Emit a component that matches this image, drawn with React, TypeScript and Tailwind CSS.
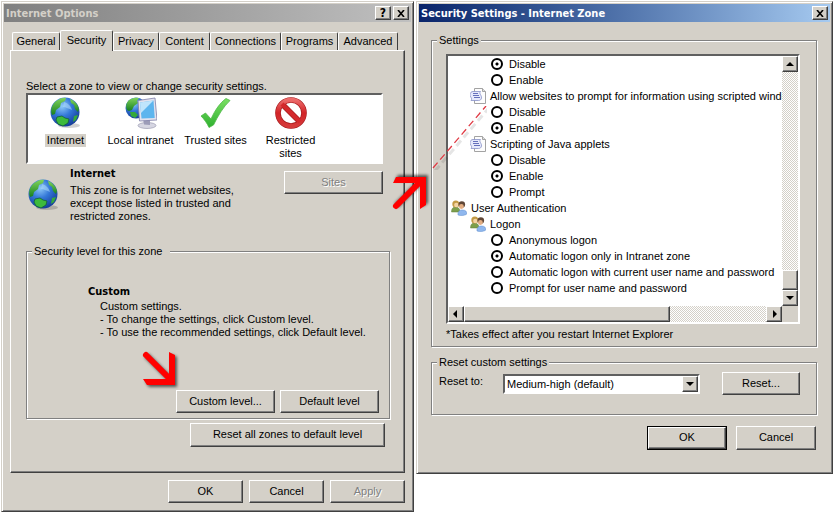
import { useState, type ReactNode } from 'react';

const TABS = [
  { label: 'General', width: 'w-[48px]' },
  { label: 'Security', width: 'w-[53px]' },
  { label: 'Privacy', width: 'w-[46px]' },
  { label: 'Content', width: 'w-[51px]' },
  { label: 'Connections', width: 'w-[71px]' },
  { label: 'Programs', width: 'w-[57px]' },
  { label: 'Advanced', width: 'w-[60px]' },
];

const OPTION_GROUPS = [
  { name: 'previous', icon: '', title: '', options: ['Disable', 'Enable'], initial: 'Disable' },
  {
    name: 'prompt',
    icon: 'script',
    title: 'Allow websites to prompt for information using scripted windo',
    options: ['Disable', 'Enable'],
    initial: 'Enable',
  },
  {
    name: 'java',
    icon: 'script',
    title: 'Scripting of Java applets',
    options: ['Disable', 'Enable', 'Prompt'],
    initial: 'Enable',
  },
  {
    name: 'logon',
    icon: 'users',
    title: 'Logon',
    options: [
      'Anonymous logon',
      'Automatic logon only in Intranet zone',
      'Automatic logon with current user name and password',
      'Prompt for user name and password',
    ],
    initial: 'Automatic logon only in Intranet zone',
  },
];

const RAISED =
  'border border-t-white border-l-white border-r-[#404040] border-b-[#404040] bg-[#d4d0c8] shadow-[inset_-1px_-1px_0_#808080]';
const SUNKEN =
  'border-2 border-t-[#606060] border-l-[#606060] border-r-white border-b-white bg-white';
const GROUP = 'border border-[#808080] shadow-[1px_1px_0_#fff,inset_1px_1px_0_#fff]';
const BOLD = "font-['DejaVu_Sans_Condensed','DejaVu_Sans',sans-serif] font-bold";

function GlobeIcon() {
  return (
    <svg viewBox="0 0 32 32" className="size-8 shrink-0" aria-hidden="true">
      <defs>
        <radialGradient id="globe-sea" cx="0.4" cy="0.3" r="0.75">
          <stop offset="0" stopColor="#8fcaf8" />
          <stop offset="0.45" stopColor="#3478d8" />
          <stop offset="1" stopColor="#123894" />
        </radialGradient>
        <linearGradient id="globe-land" x1="0" y1="0" x2="0" y2="1">
          <stop offset="0" stopColor="#7fd35c" />
          <stop offset="1" stopColor="#17801f" />
        </linearGradient>
      </defs>
      <ellipse cx="19" cy="28.5" rx="11" ry="2.5" fill="#000" opacity="0.18" />
      <circle cx="15" cy="15" r="14.5" fill="url(#globe-sea)" />
      <path d="M8 3c3-2 6-2.5 8-2l-1 3-4 2-1 4-4 3-1 4-3 1C-.5 12 3 5.500 8 3z" fill="url(#globe-land)" />
      <path d="M20 2c5 2 8 6 9 10l-1 3-3-3-1-4-3-2z" fill="url(#globe-land)" />
      <path d="M7 20l5-1 3 2 4 1-1 4-5 3-5-2-2-4z" fill="#3dba3c" stroke="#145f3a" strokeWidth="0.8" />
      <path d="M24 19l4-1-2 5-3 2z" fill="#35a93a" />
      <path d="M14 5c4 1 7 4 8 8-3-1-6-3-9-3z" fill="#b6e0fb" opacity="0.5" />
    </svg>
  );
}

function IntranetIcon() {
  return (
    <svg viewBox="0 0 32 32" className="size-8 shrink-0" aria-hidden="true">
      <circle cx="11" cy="11" r="10.5" fill="url(#globe-sea)" />
      <path d="M6 2c3-1.5 6-1.500 8-1l-2 3 1 2-4 3-2 4-3 1-2-1C0 8 2 4 6 2z" fill="url(#globe-land)" />
      <path d="M5 15l5 0 3 3-3 3-4-2z" fill="#35a93a" />
      <ellipse cx="22" cy="28.5" rx="9" ry="3" fill="#d6d6e2" stroke="#8b8ba5" strokeWidth="0.6" />
      <path d="M18 22l7 1v5l-6-.5z" fill="#9c9cb8" />
      <path d="M13 3.500L30 1l2 22-17.500 1z" fill="#e2e2ee" stroke="#8080a8" strokeWidth="0.8" />
      <path d="M15 5.500l13.500-2 1.200 17.500-13.200.5z" fill="#5db5ee" />
      <path d="M15 5.500l13.500-2L16 16z" fill="#bfe5fc" />
    </svg>
  );
}

function TrustedIcon() {
  return (
    <svg viewBox="0 0 32 32" className="size-8 shrink-0" aria-hidden="true">
      <defs>
        <linearGradient id="check" x1="0" y1="0" x2="0" y2="1">
          <stop offset="0" stopColor="#7be063" />
          <stop offset="1" stopColor="#2fb030" />
        </linearGradient>
      </defs>
      <path
        d="M1 19l4.500-3 5.500 6C15 13 20 6 26 1.500l4 2C23 10 18 19 13.500 28L9 30.500C7 26 4 22 1 19z"
        fill="url(#check)"
        stroke="#4db845"
        strokeWidth="0.8"
      />
    </svg>
  );
}

function RestrictedIcon() {
  return (
    <svg viewBox="0 0 32 32" className="size-8 shrink-0" aria-hidden="true">
      <defs>
        <linearGradient id="stop" x1="0" y1="0" x2="0" y2="1">
          <stop offset="0" stopColor="#ec6a6a" />
          <stop offset="0.5" stopColor="#d22427" />
          <stop offset="1" stopColor="#d63a3a" />
        </linearGradient>
      </defs>
      <g fill="none">
        <circle cx="16" cy="16" r="13" stroke="#a51a1c" strokeWidth="5.6" />
        <path d="M8 8l16 16" stroke="#a51a1c" strokeWidth="5.6" />
        <circle cx="16" cy="16" r="13" stroke="url(#stop)" strokeWidth="4.4" />
        <path d="M7 7l18 18" stroke="#d4292c" strokeWidth="4.2" />
      </g>
    </svg>
  );
}

function ScriptIcon() {
  return (
    <svg viewBox="0 0 16 16" className="size-4 shrink-0" aria-hidden="true">
      <path d="M4.500.5h8l3 3v12h-11z" fill="#fdfdfd" stroke="#a3a3a3" />
      <path d="M12.500.5v3h3" fill="#ddd" stroke="#a3a3a3" />
      <path
        d="M3 3.500h7.500c-2 2 1.500 4 1 6.500-.3 1.800-1.500 2.500-3 2.500H1c2-2-1.500-4-1-6 .3-1.800 1.300-3 3-3z"
        fill="#e6e9fc"
        stroke="#8890c8"
        strokeWidth="0.8"
      />
      <path d="M3 5.500h5M3 7.500h6M4 9.500h6" stroke="#6570bc" />
    </svg>
  );
}

function UsersIcon() {
  return (
    <svg viewBox="0 0 16 16" className="size-4 shrink-0" aria-hidden="true">
      <path d="M.5 12c0-3.500 1.500-5 4-5s4.500 1.500 4.500 5z" fill="#7d9f4c" stroke="#5d7c38" strokeWidth="0.5" />
      <circle cx="4.800" cy="4" r="3.500" fill="#c39a45" />
      <circle cx="5.300" cy="5" r="2.200" fill="#f3d3a4" />
      <path
        d="M7 15c-.5-3.500 1.500-5 4.500-5s4.500 1.500 4.300 4c-1.500 1.500-6 2-8.800 1z"
        fill="#8fb7ee"
        stroke="#5f8ccc"
        strokeWidth="0.5"
      />
      <circle cx="10.800" cy="4.500" r="3.300" fill="#5f4636" />
      <circle cx="10.400" cy="6.500" r="2.400" fill="#e3ae83" />
    </svg>
  );
}

function CloseIcon() {
  return (
    <svg viewBox="0 0 8 7" className="h-[7px] w-[8px]" aria-hidden="true">
      <path d="M1 0l6 7M7 0L1 7" stroke="#000" strokeWidth="1.6" />
    </svg>
  );
}

function Triangle({ points }: { points: string }) {
  return (
    <svg viewBox="0 0 8 8" className="size-2" aria-hidden="true">
      <polygon points={points} fill="#000" />
    </svg>
  );
}

const ZONES = [
  { label: 'Internet', icon: <GlobeIcon /> },
  { label: 'Local intranet', icon: <IntranetIcon /> },
  { label: 'Trusted sites', icon: <TrustedIcon /> },
  { label: 'Restricted sites', icon: <RestrictedIcon /> },
];

function WinButton({ className, disabled, children }: { className: string; disabled?: boolean; children: ReactNode }) {
  return (
    <button
      type="button"
      disabled={disabled}
      className={`${RAISED} ${className} shrink-0 whitespace-nowrap pb-px text-center disabled:text-[#808080] disabled:[text-shadow:1px_1px_0_#fff]`}
    >
      {children}
    </button>
  );
}

function CaptionButton({ label, children }: { label: string; children: ReactNode }) {
  return (
    <button
      type="button"
      aria-label={label}
      className={`${RAISED} ${BOLD} flex h-[14px] w-4 items-center justify-center text-[12px]`}
    >
      {children}
    </button>
  );
}

function ScrollButton({ label, points }: { label: string; points: string }) {
  return (
    <button type="button" aria-label={label} className={`${RAISED} flex size-4 shrink-0 items-center justify-center`}>
      <Triangle points={points} />
    </button>
  );
}

function Window({ children }: { children: ReactNode }) {
  return (
    <div className="border border-t-[#d4d0c8] border-l-[#d4d0c8] border-r-[#404040] border-b-[#404040] bg-[#d4d0c8] p-[2px] shadow-[inset_1px_1px_0_#fff,inset_-1px_-1px_0_#808080]">
      {children}
    </div>
  );
}

function InternetOptions() {
  const [zone, setZone] = useState('Internet');

  return (
    <Window>
      <header className="flex h-[18px] items-center justify-between bg-linear-to-r from-[#808080] to-[#c0c0c0] px-[2px]">
        <h1 className={`${BOLD} text-[#d4d0c8]`}>Internet Options</h1>
        <div className="flex gap-[2px]">
          <CaptionButton label="Help">?</CaptionButton>
          <CaptionButton label="Close">
            <CloseIcon />
          </CaptionButton>
        </div>
      </header>

      <div className="mx-[6px] mt-2">
        <div role="tablist" className="flex h-5 items-end pl-[2px]">
          {TABS.map((tab) => {
            const active = tab.label === 'Security';
            return (
              <button
                key={tab.label}
                type="button"
                role="tab"
                aria-selected={active}
                className={`${tab.width} rounded-t-[2px] border border-b-0 border-t-white border-l-white border-r-[#404040] bg-[#d4d0c8] text-center ${
                  active ? 'z-10 -mb-px h-[21px] pb-[2px]' : 'h-[18px]'
                }`}
              >
                {tab.label}
              </button>
            );
          })}
        </div>

        <div
          role="tabpanel"
          className="border border-t-white border-l-white border-r-[#404040] border-b-[#404040] pt-[29px] pr-[14px] pb-[25px] pl-[15px] shadow-[inset_-1px_-1px_0_#808080]"
        >
          <p>Select a zone to view or change security settings.</p>
          <div className={`${SUNKEN} mr-[7px] flex h-[71px] items-start pt-[2px]`}>
            {ZONES.map((z) => (
              <button
                key={z.label}
                type="button"
                onClick={() => setZone(z.label)}
                className="flex w-[75px] flex-col items-center gap-[5px]"
              >
                {z.icon}
                <span className={zone === z.label ? 'bg-[#d4d0c8] px-[2px]' : 'px-[2px]'}>{z.label}</span>
              </button>
            ))}
          </div>

          <div className="mt-[3px] mr-[7px] flex items-start">
            <div className="mt-3 ml-[2px]">
              <GlobeIcon />
            </div>
            <div className="ml-[10px] flex-1">
              <h2 className={BOLD}>Internet</h2>
              <p className="mt-1 max-w-[170px]">
                This zone is for Internet websites, except those listed in trusted and restricted zones.
              </p>
            </div>
            <WinButton disabled className="mt-1 h-[23px] w-[99px]">
              Sites
            </WinButton>
          </div>

          <fieldset className={`${GROUP} mt-[22px] pr-[10px] pb-[5px] pl-[5px]`}>
            <legend className="bg-[#d4d0c8] pr-2 pl-[2px]">Security level for this zone</legend>
            <div className="mt-[27px] ml-14">
              <h2 className={BOLD}>Custom</h2>
              <div className="mt-[2px] ml-3">
                <p>Custom settings.</p>
                <p>- To change the settings, click Custom level.</p>
                <p>- To use the recommended settings, click Default level.</p>
              </div>
            </div>
            <div className="mt-[51px] flex justify-end gap-[5px]">
              <WinButton className="h-[23px] w-[99px]">Custom level...</WinButton>
              <WinButton className="h-[23px] w-[99px]">Default level</WinButton>
            </div>
          </fieldset>

          <div className="mt-1 mr-[5px] flex justify-end">
            <WinButton className="h-6 w-[195px]">Reset all zones to default level</WinButton>
          </div>
        </div>

        <footer className="mt-[7px] mb-[6px] flex justify-end gap-[6px]">
          <WinButton className="h-[23px] w-[75px]">OK</WinButton>
          <WinButton className="h-[23px] w-[75px]">Cancel</WinButton>
          <WinButton disabled className="h-[23px] w-[75px]">
            Apply
          </WinButton>
        </footer>
      </div>
    </Window>
  );
}

function SettingsList() {
  return (
    <div className={`${SUNKEN} flex`}>
      <div className="min-w-0 flex-1">
        <div className="h-[250px] overflow-hidden whitespace-nowrap">
          {OPTION_GROUPS.map((group) => (
            <div key={group.name} role="radiogroup" aria-label={group.title || 'Previous setting'}>
              {group.name === 'logon' && (
                <div className="flex h-4 items-center gap-1 pl-[3px]">
                  <UsersIcon />
                  User Authentication
                </div>
              )}
              {group.title && (
                <div className="flex h-4 items-center gap-1 pl-[22px]">
                  {group.icon === 'script' ? <ScriptIcon /> : <UsersIcon />}
                  {group.title}
                </div>
              )}
              {group.options.map((option) => (
                <label key={option} className="flex h-4 items-center gap-[6px] pl-[43px]">
                  <input
                    type="radio"
                    name={group.name}
                    defaultChecked={option === group.initial}
                    className="size-3 shrink-0 appearance-none rounded-full border-2 border-black bg-white checked:bg-[radial-gradient(circle,#000_1px,#fff_2px)]"
                  />
                  {option}
                </label>
              ))}
            </div>
          ))}
        </div>
        <div className="flex bg-[repeating-conic-gradient(#fff_0_25%,#d4d0c8_0_50%)] bg-[length:2px_2px]">
          <ScrollButton label="Scroll left" points="5,0 5,8 1,4" />
          <div className={`${RAISED} h-4 w-[206px]`} />
          <div className="flex-1" />
          <ScrollButton label="Scroll right" points="3,0 3,8 7,4" />
        </div>
      </div>
      <div className="flex w-4 flex-col bg-[#d4d0c8]">
        <div className="flex flex-1 flex-col bg-[repeating-conic-gradient(#fff_0_25%,#d4d0c8_0_50%)] bg-[length:2px_2px]">
          <ScrollButton label="Scroll up" points="0,6 8,6 4,2" />
          <div className="flex-1" />
          <div className={`${RAISED} h-5`} />
          <ScrollButton label="Scroll down" points="0,2 8,2 4,6" />
        </div>
        <div className="h-4" />
      </div>
    </div>
  );
}

function SecuritySettings() {
  return (
    <Window>
      <header className="flex h-[18px] items-center justify-between bg-linear-to-r from-[#0a246a] to-[#a6caf0] px-[2px]">
        <h1 className={`${BOLD} text-white`}>Security Settings - Internet Zone</h1>
        <CaptionButton label="Close">
          <CloseIcon />
        </CaptionButton>
      </header>

      <div className="mt-3 mr-[13px] mb-[21px] ml-3">
        <fieldset className={`${GROUP} min-w-0 px-[5px] pb-[5px]`}>
          <legend className="bg-[#d4d0c8] px-[2px]">Settings</legend>
          <div className="mt-[7px] mr-[11px] ml-[9px]">
            <SettingsList />
            <p className="mt-1">*Takes effect after you restart Internet Explorer</p>
          </div>
        </fieldset>

        <fieldset className={`${GROUP} mt-[9px] min-w-0 px-[5px] pb-[19px]`}>
          <legend className="bg-[#d4d0c8] px-[2px]">Reset custom settings</legend>
          <div className="mt-[3px] mr-[11px] ml-[2px] flex items-start">
            <label htmlFor="reset-to" className="mt-[3px] w-16">
              Reset to:
            </label>
            <div className="relative mt-[2px] w-[197px]">
              <select id="reset-to" className={`${SUNKEN} block h-5 w-full appearance-none pl-[2px]`}>
                <option>Medium-high (default)</option>
                <option>Medium</option>
                <option>High</option>
              </select>
              <span
                className={`${RAISED} pointer-events-none absolute top-[2px] right-[2px] flex size-4 items-center justify-center`}
              >
                <Triangle points="0,2 8,2 4,6" />
              </span>
            </div>
            <WinButton className="ml-auto h-[23px] w-[78px]">Reset...</WinButton>
          </div>
        </fieldset>

        <footer className="mt-[11px] mr-px flex items-center justify-end gap-[10px]">
          <WinButton className="h-[22px] w-[78px] outline outline-black">OK</WinButton>
          <WinButton className="h-6 w-20">Cancel</WinButton>
        </footer>
      </div>
    </Window>
  );
}

function RedArrow({ className }: { className: string }) {
  return (
    <svg
      viewBox="0 0 36 36"
      className={`pointer-events-none size-9 overflow-visible ${className}`}
      aria-hidden="true"
    >
      <defs>
        <filter id="arrow-blur" x="-20%" y="-20%" width="150%" height="150%">
          <feGaussianBlur stdDeviation="1.5" />
        </filter>
      </defs>
      <g transform="translate(2 2)" filter="url(#arrow-blur)" opacity="0.6">
        <path d="M3 3l25 25" stroke="#000" strokeWidth="6" strokeLinecap="round" />
        <path d="M26 0l6 3v30H4l-4-6h26z" fill="#000" />
      </g>
      <path d="M3 3l25 25" stroke="#f00" strokeWidth="6" strokeLinecap="round" />
      <path d="M26 0l6 3v30H4l-4-6h26z" fill="#f00" />
    </svg>
  );
}

export default function App() {
  return (
    <main className="relative flex items-start gap-[2px] bg-white pt-px pl-px font-['Liberation_Sans',sans-serif] text-[11px] leading-[13px] text-black">
      <div className="min-w-0 flex-[413]">
        <InternetOptions />
      </div>
      <div className="min-w-0 flex-[417]">
        <SecuritySettings />
      </div>

      {/* step markers drawn over both dialogs */}
      <RedArrow className="absolute top-[352px] left-[143px]" />
      <RedArrow className="absolute top-[173px] left-[393px] -rotate-90" />
      <svg
        viewBox="0 0 56 64"
        className="pointer-events-none absolute top-[106px] left-[431px] h-16 w-14"
        aria-hidden="true"
      >
        <path d="M4 65L57 3" stroke="#000" strokeOpacity="0.1" strokeWidth="3" strokeDasharray="7 4" />
        <path d="M2 62L55 0" stroke="#e03a44" strokeWidth="1.3" strokeDasharray="7 4" />
      </svg>
    </main>
  );
}
